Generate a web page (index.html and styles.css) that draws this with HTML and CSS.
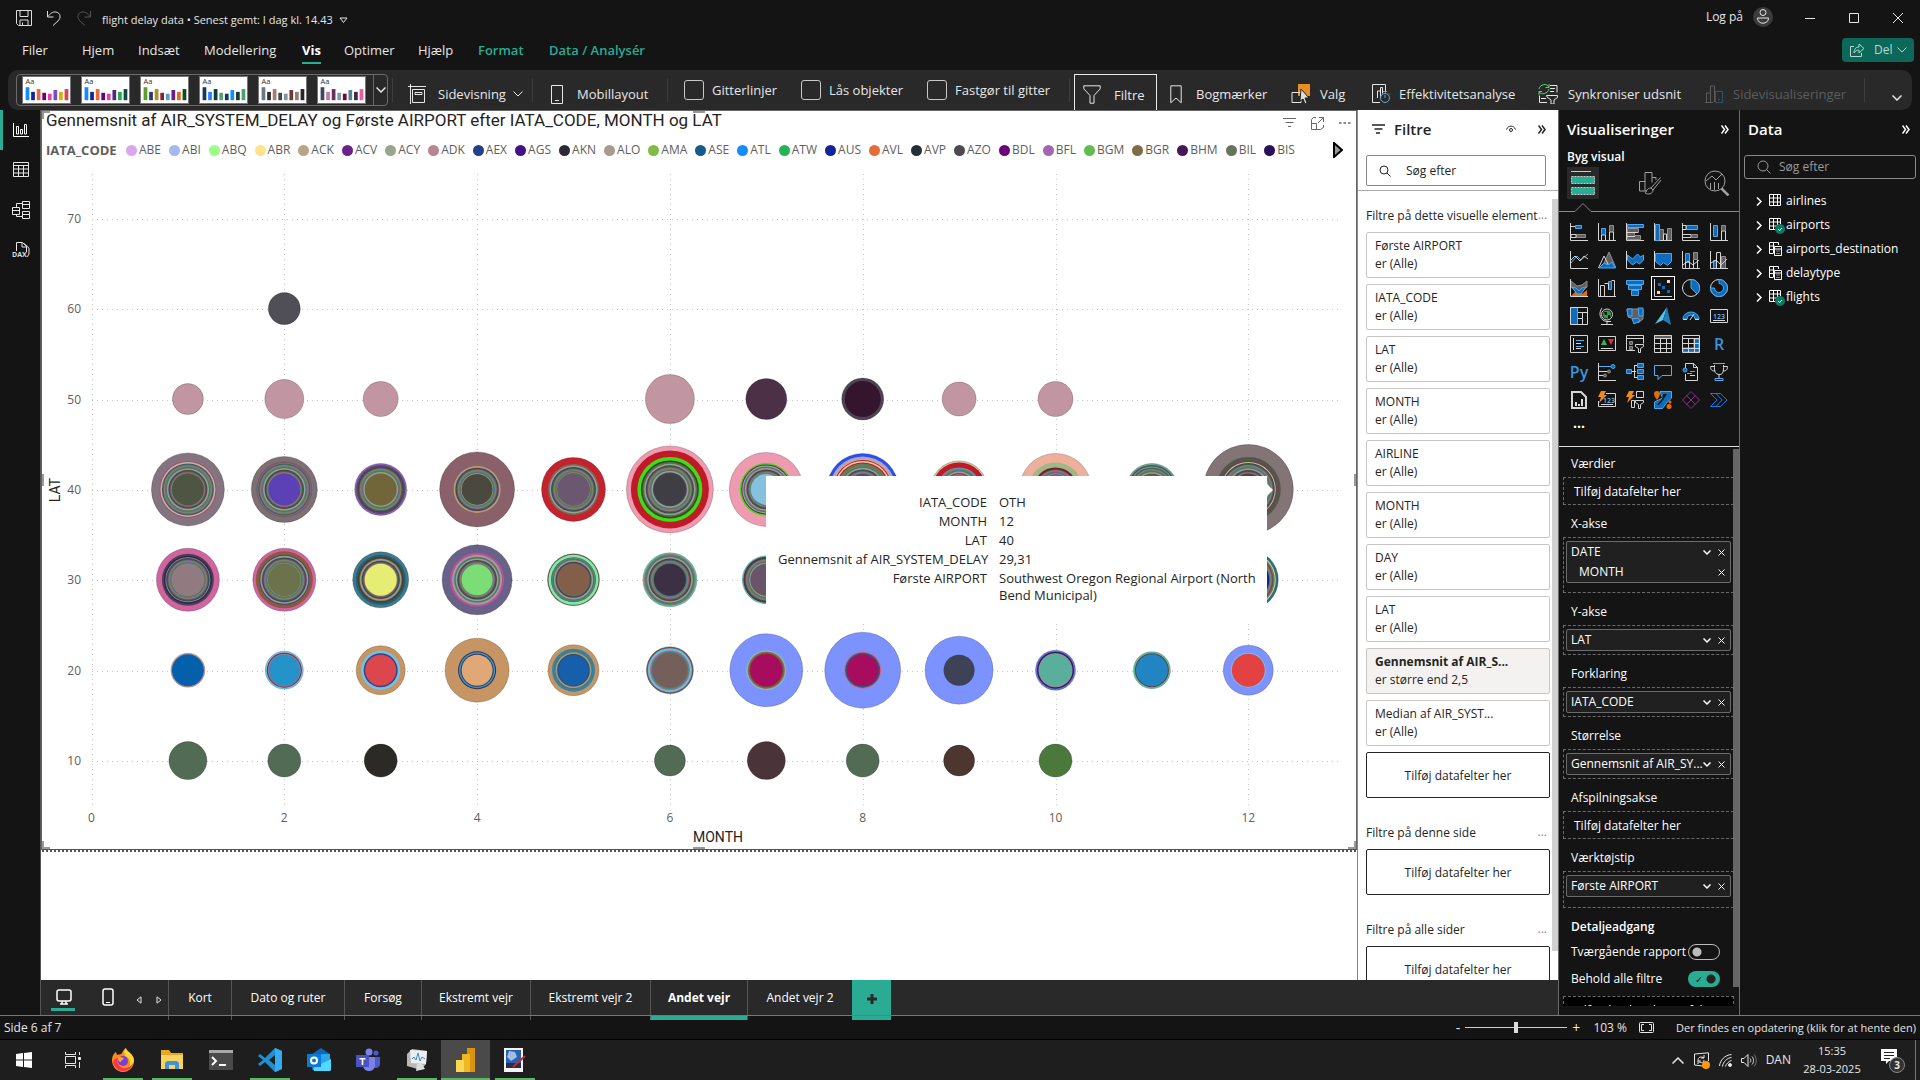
FILE: index.html
```html
<!DOCTYPE html>
<html lang="da">
<head>
<meta charset="utf-8">
<title>flight delay data</title>
<link rel="stylesheet" href="styles.css">
</head>
<body>
<header class="titlebar">
  <div class="quick">
    <button class="plain" aria-label="Gem"><svg width="16" height="16" viewBox="0 0 16 16"><path d="M.5.5h15v15H2.500l-2-2zM4 .5v6h8v-6M4 15.500v-5.500h8v5.500M6.500 12.500v3"/></svg></button>
    <button class="plain" aria-label="Fortryd"><svg width="16" height="16" viewBox="0 0 16 16"><path d="M1.500 1v6h6M2 6.500C4 3.500 7 1.500 10 2c5 1 5 6 2 9l-5 4.500"/></svg></button>
    <button class="plain dim" aria-label="Annuller fortryd"><svg width="16" height="16" viewBox="0 0 16 16"><path d="M14.500 1v6h-6M14 6.500C12 3.500 9 1.500 6 2c-5 1-5 6-2 9l5 4.500"/></svg></button>
  </div>
  <button class="plain filename">flight delay data • Senest gemt: I dag kl. 14.43 <svg width="9" height="7" viewBox="0 0 9 7"><path d="M1 1h7L4.500 5.500z"/></svg></button>
  <div class="account">
    <span>Log på</span>
    <svg width="20" height="20" viewBox="0 0 20 20"><circle cx="10" cy="10" r="10" fill="#3b3b3b" stroke="none"/><circle cx="10" cy="5.500" r="3"/><path d="M4.500 11h11c0 7-11 7-11 0z"/></svg>
  </div>
  <div class="wincontrols">
    <button class="plain" aria-label="Minimer"><svg width="12" height="12" viewBox="0 0 12 12"><path d="M1 6.500h10"/></svg></button>
    <button class="plain" aria-label="Maksimer"><svg width="12" height="12" viewBox="0 0 12 12"><path d="M1.500 1.500h9v9h-9z"/></svg></button>
    <button class="plain" aria-label="Luk"><svg width="12" height="12" viewBox="0 0 12 12"><path d="M1 1l10 10M11 1L1 11"/></svg></button>
  </div>
</header>

<nav class="menubar">
  <div class="menus">
    <a href="#">Filer</a><a href="#">Hjem</a><a href="#">Indsæt</a><a href="#">Modellering</a><a href="#" class="active">Vis</a><a href="#">Optimer</a><a href="#">Hjælp</a><a href="#" class="context">Format</a><a href="#" class="context">Data / Analysér</a>
  </div>
  <button class="share"><svg width="16" height="16" viewBox="0 0 16 16"><path d="M5 4.500H1.500v10h11V11M5 11c0-4 2-6 5-6V2l5 4.500-5 4.500V8C8 8 6 9 5 11z"/></svg>Del<svg width="10" height="6" viewBox="0 0 10 6"><path d="M.5.5L5 5 9.500.5"/></svg></button>
</nav>

<div class="ribbon">
  <div class="gallerycell"><div class="gallery"><div class="themes" id="themes"></div><button class="plain more" aria-label="Flere temaer"><svg width="10" height="6" viewBox="0 0 10 6"><path class="heavy" d="M.5.5L5 5 9.500.5"/></svg></button></div></div>
  <button class="tool sep"><svg width="20" height="20" viewBox="0 0 20 20"><path d="M1 2.500h18M3.500 0v20M5.500 5.500h12v13h-12zM8 8.500h7v2H8z"/></svg>Sidevisning<svg width="10" height="6" viewBox="0 0 10 6"><path d="M.5.5L5 5 9.500.5"/></svg></button>
  <button class="tool sep mobile"><svg width="12" height="19" viewBox="0 0 12 19"><path d="M.5.5h11v18H.5zM4 15.500h4"/></svg>Mobillayout</button>
  <div class="checks sep">
    <label><input type="checkbox">Gitterlinjer</label>
    <label><input type="checkbox">Lås objekter</label>
    <label><input type="checkbox">Fastgør til gitter</label>
  </div>
  <div class="filtercell sep"><button class="tool on"><svg width="18" height="19" viewBox="0 0 18 19"><path d="M.8.8h16.400v3L11 10.500v7.700H7V10.500L.8 3.800z"/></svg>Filtre</button></div>
  <button class="tool mark"><svg width="12" height="19" viewBox="0 0 12 19"><path d="M.8.8h10.400v17L6 13l-5.200 4.800z"/></svg>Bogmærker</button>
  <button class="tool pick"><svg width="20" height="20" viewBox="0 0 20 20"><path d="M7 0h12v12H7z" fill="#e88f22" stroke="none"/><path d="M1 8.500h9v10H1z"/><path d="M10 5l8 9h-4l2 5-2 1-2-5-3 2z" fill="#ddd" stroke="#222"/></svg>Valg</button>
  <button class="tool perf"><svg width="19" height="20" viewBox="0 0 19 20"><path d="M8 18.500H.5V.5h13v8M5.500 14V7h3v7M8.500 9V3.500h2v6"/><g class="blue"><circle cx="13" cy="14" r="4.500"/><path d="M13 14V11M11 7.500h4M17 9.500l1 1"/></g></svg>Effektivitetsanalyse</button>
  <button class="tool sync"><svg width="20" height="20" viewBox="0 0 20 20"><path d="M12 1.500h7v7M12 4.500h5M12 7.500h4M9 18.500H1.500v-7M3 14.500h5M8.500 11.500h11v2L16 16v4h-3v-4l-4-3z"/><path class="green" d="M1 5c1-5 8-6 10-2M11 0v3.500H7.500M11 5c-1 5-8 6-10 3M1 11V7.500h3"/></svg>Synkroniser udsnit</button>
  <button class="tool off" disabled><svg width="18" height="19" viewBox="0 0 18 19"><path d="M0 17.500h8M1.500 17V8h4v9M5.500 9V1h4v5M9.500 17V6"/><path d="M10.500 6.500h7v11h-7zM13 14.500h2" stroke="#345266"/></svg>Sidevisualiseringer</button>
  <div class="sep collapse"><button class="plain" aria-label="Skjul båndet"><svg width="10" height="6" viewBox="0 0 10 6"><path class="heavy" d="M.5.5L5 5 9.500.5"/></svg></button></div>
</div>

<main class="work">
  <nav class="rail">
    <button class="plain current" aria-label="Rapportvisning"><svg width="16" height="16" viewBox="0 0 16 16"><path d="M.5 1v13.500H16M3.500 12V4.500h2V12zM7.500 12V7.500h2V12zM11.500 12V2.500h2V12z"/></svg></button>
    <button class="plain" aria-label="Tabelvisning"><svg width="16" height="16" viewBox="0 0 16 16"><path d="M.5.5h15v14H.5zM.5 3.500h15M.5 7h15M.5 11h15M5.500 3.500v11M10.500 3.500v11"/></svg></button>
    <button class="plain" aria-label="Modelvisning"><svg width="18" height="18" viewBox="0 0 18 18"><path d="M.5 6.500h7v7h-7zM.5 9.500h7M10.500.5h7v7h-7zM10.500 3.500h7M10.500 10.500h7v7h-7zM10.500 13.500h7M4.500 6V2.500h6M4.500 14v1.500h6"/></svg></button>
    <button class="plain" aria-label="DAX-forespørgselsvisning"><svg width="18" height="18" viewBox="0 0 18 18"><path d="M4.500 10V1.500h6l4 4V11M10 1.500v4.500h5M12 2.500l5 4.500V13l-2 3"/><text x="0" y="16" class="dax">DAX</text></svg></button>
  </nav>

  <section class="center">
    <div class="upper">
      <article class="canvas">
        <div class="visual">
          <div class="vtitle">
            <h1>Gennemsnit af AIR_SYSTEM_DELAY og Første AIRPORT efter IATA_CODE, MONTH og LAT</h1>
            <div class="vtools">
              <svg width="13" height="10" viewBox="0 0 13 10"><path d="M0 .5h13M2.500 4.500h8M5 8.500h3"/></svg>
              <svg width="13" height="13" viewBox="0 0 13 13"><path d="M5 .5H2.500l-2 2V12.500h9l3-2V8M.5 6.500h5v6M8 .5h4.500V5M12.500.5L7 6"/></svg>
              <svg width="12" height="4" viewBox="0 0 12 4"><path d="M0 2h2.500M4.500 2H7M9 2h2.500" class="heavy"/></svg>
            </div>
          </div>
          <div class="legend"><b>IATA_CODE</b><ul id="legend"></ul><svg class="next" width="10" height="16" viewBox="0 0 10 16"><path d="M1 1v14l8-7z"/></svg></div>
          <svg class="plot" id="plot" viewBox="42 166 1314 682"></svg>
          <i class="h tl"></i><i class="h tm"></i><i class="h bl"></i><i class="h bm"></i><i class="h br"></i><i class="h ml"></i><i class="h mr"></i>
          <div class="tooltip">
            <dl>
              <dt>IATA_CODE</dt><dd>OTH</dd>
              <dt>MONTH</dt><dd>12</dd>
              <dt>LAT</dt><dd>40</dd>
              <dt>Gennemsnit af AIR_SYSTEM_DELAY</dt><dd>29,31</dd>
              <dt>Første AIRPORT</dt><dd>Southwest Oregon Regional Airport (North Bend Municipal)</dd>
            </dl>
          </div>
        </div>
      </article>

      <aside class="filters">
        <div class="fhead">
          <svg width="13" height="10" viewBox="0 0 13 10"><path d="M0 1h13M2.500 5h8M4 9h4" class="heavy"/></svg>
          <h2>Filtre</h2>
          <svg width="10" height="8" viewBox="0 0 10 8"><path d="M.5 4.500C2 0 8 0 9.500 4.500"/><circle cx="5" cy="5" r="1.500"/></svg>
          <button class="plain" aria-label="Skjul ruden"><svg width="8" height="9" viewBox="0 0 8 9"><path d="M.5.5l3 4-3 4M4 .5l3 4-3 4" class="heavy"/></svg></button>
        </div>
        <div class="fsearch"><svg width="12" height="12" viewBox="0 0 12 12"><circle cx="5" cy="5" r="4"/><path d="M8 8l3.500 3.500"/></svg><input type="text" placeholder="Søg efter" aria-label="Søg i filtre"></div>
        <div class="flist">
          <h3>Filtre på dette visuelle element<span>...</span></h3>
          <div class="card"><p>Første AIRPORT</p><p>er (Alle)</p></div>
          <div class="card"><p>IATA_CODE</p><p>er (Alle)</p></div>
          <div class="card"><p>LAT</p><p>er (Alle)</p></div>
          <div class="card"><p>MONTH</p><p>er (Alle)</p></div>
          <div class="card"><p>AIRLINE</p><p>er (Alle)</p></div>
          <div class="card"><p>MONTH</p><p>er (Alle)</p></div>
          <div class="card"><p>DAY</p><p>er (Alle)</p></div>
          <div class="card"><p>LAT</p><p>er (Alle)</p></div>
          <div class="card set"><p>Gennemsnit af AIR_S...</p><p>er større end 2,5</p></div>
          <div class="card"><p>Median af AIR_SYST...</p><p>er (Alle)</p></div>
          <div class="drop">Tilføj datafelter her</div>
          <h3 class="later">Filtre på denne side<span>...</span></h3>
          <div class="drop">Tilføj datafelter her</div>
          <h3 class="later">Filtre på alle sider<span>...</span></h3>
          <div class="drop">Tilføj datafelter her</div>
        </div>
      </aside>
    </div>

    <nav class="pages">
      <button class="plain view on" aria-label="Skrivebordslayout"><svg width="16" height="16" viewBox="0 0 16 16"><rect x="1" y="1" width="14" height="11" rx="2" class="heavy"/><path d="M4 15h8M6 12v3M10 12v3" class="heavy"/></svg></button>
      <button class="plain view" aria-label="Mobillayout"><svg width="12" height="18" viewBox="0 0 12 18"><rect x="1" y="1" width="10" height="16" rx="2" class="heavy"/><path d="M4 14.500h4"/></svg></button>
      <button class="plain" aria-label="Forrige side"><svg width="6" height="8" viewBox="0 0 6 8"><path d="M5 .8v6.400L1 4z"/></svg></button>
      <button class="plain" aria-label="Næste side"><svg width="6" height="8" viewBox="0 0 6 8"><path d="M1 .8v6.400L5 4z"/></svg></button>
      <a href="#">Kort</a><a href="#">Dato og ruter</a><a href="#">Forsøg</a><a href="#">Ekstremt vejr</a><a href="#">Ekstremt vejr 2</a><a href="#" class="active">Andet vejr</a><a href="#">Andet vejr 2</a>
      <button class="add" aria-label="Ny side"><svg width="12" height="12" viewBox="0 0 12 12"><path d="M6 1v10M1 6h10"/></svg></button>
    </nav>
  </section>

  <aside class="viz">
    <div class="phead"><h2>Visualiseringer</h2><button class="plain" aria-label="Skjul ruden"><svg width="8" height="9" viewBox="0 0 8 9"><path d="M.5.5l3 4-3 4M4 .5l3 4-3 4" class="heavy"/></svg></button></div>
    <h3>Byg visual</h3>
    <div class="modes">
      <button class="plain on" aria-label="Byg visual"><svg width="26" height="26" viewBox="0 0 26 26"><path d="M1 1.500h20"/><rect x="1.500" y="6.500" width="23" height="7" fill="#2aac94" stroke-dasharray="2 1"/><rect x="1.500" y="17.500" width="23" height="7" fill="#2aac94" stroke-dasharray="2 1"/></svg></button>
      <button class="plain grey" aria-label="Formatér visual"><svg width="24" height="24" viewBox="0 0 24 24"><path d="M9 20H1.500V10.500H7V20M7 11V1.500h7v10M14 6.500h4V9M22.500 6.500L13 17M23 9L15 19M13 17c-4 0-4 3-6 5 3 2 8 1 8-3z"/></svg></button>
      <button class="plain grey" aria-label="Analyse"><svg width="26" height="26" viewBox="0 0 26 26"><circle cx="11" cy="11" r="10"/><path d="M2 11l6-5 4 4 6-6M6.500 19v-6M10.500 20v-8M14.500 19v-6"/><path d="M17.500 18.500l7 7" stroke-width="2.500"/></svg></button>
    </div>
    <svg class="notch" width="180" height="9" viewBox="0 0 180 9"><path d="M0 8.500H16L24 .5 32 8.500H180"/></svg>
    <div class="types">
      <button><svg viewBox="0 0 18 18"><path class="w" d="M.5 0V17.500H18"/><path class="g" d="M6.500 11.500h9v3H6.500z"/><path class="w" d="M1 3.500h5M1 11.500h5v3H1z"/><path class="b" d="M5.500 2.500h6v3h-6z"/></svg></button>
      <button><svg viewBox="0 0 18 18"><path class="w" d="M.5 0V17.500H18M3.500 17v-5h4v5M11.500 17V9h4v8"/><path class="g" d="M11.500 2.500h4v6h-4z"/><path class="b" d="M3.500 5.500h4v6h-4z"/></svg></button>
      <button><svg viewBox="0 0 18 18"><path class="g" d="M1.500 5.500h11v4h-4v3h6v4h-13z"/><path class="w" d="M.5 0V17.500H18M1 9.500h11M1 13.500h8"/><path class="b" d="M1.500 1.500h16v3h-16z"/></svg></button>
      <button><svg viewBox="0 0 18 18"><path class="g" d="M5.500 6.500h4v11h-4zM13.500 5.500h4v12h-4z"/><path class="w" d="M.5 0V17.500H18M9.500 17v-6h3v6"/><path class="b" d="M1.500 1.500h4v16h-4z"/></svg></button>
      <button><svg viewBox="0 0 18 18"><path class="w" d="M.5 0V17.500H18M1 11.500h8v3H1"/><path class="g" d="M9.500 11.500h6v3h-6z"/><path class="b" d="M4.500 2.500h11v4h-11z"/><path class="w" d="M1 2.500h3v4H1"/></svg></button>
      <button><svg viewBox="0 0 18 18"><path class="w" d="M.5 0V17.500H18M11.500 17V8h4v9"/><path class="b" d="M3.500 2.500h4v11h-4z"/><path class="g" d="M11.500 2.500h4v5h-4z"/></svg></button>

      <button><svg viewBox="0 0 18 18"><path class="l" d="M1 12l6-7 4 4 7-6"/><path class="w" d="M.5 0V17.500H18M1 9l4-4 5 5 4-5 4 3"/></svg></button>
      <button><svg viewBox="0 0 18 18"><path class="g" d="M6 12L11 1l7 16z"/><path class="w" d="M.5 17L6 5l6 12"/><path class="b" d="M1 17l5-5 4 2 4-3 3 6z"/></svg></button>
      <button><svg viewBox="0 0 18 18"><path class="b" d="M1.500 4l5 4 5-5 3 3 3-2v5l-4 4-3-2-4 3-5-5z"/><path class="w" d="M.5 0V17.500H18"/></svg></button>
      <button><svg viewBox="0 0 18 18"><path class="b" d="M1.500 2.500h16v8l-4 4-4-3-3 3-5-4z"/><path class="w" d="M.5 0V17.500H18"/></svg></button>
      <button><svg viewBox="0 0 18 18"><path class="b" d="M3.500 2.500h4v9h-4z"/><path class="g" d="M11.500 1.500h4v7h-4z"/><path class="w" d="M.5 0V17.500H18M3.500 11v6M7.500 11v6M11.500 9v8M15.500 9v8M1 14l5-4 5 4 6-5"/></svg></button>
      <button><svg viewBox="0 0 18 18"><path class="b" d="M3.500 9.500h3v8h-3z"/><path class="g" d="M11.500 5.500h4v12h-4z"/><path class="w" d="M.5 0V17.500H18M6.500 17V1.500h4V17M1 12l5-3 5 5 6-6"/></svg></button>

      <button><svg viewBox="0 0 18 18"><path d="M1 17l5-5 6 3 5-4v6z" fill="#e66c00" stroke="none"/><path class="g" d="M1 2l6 5 5-1 5-4v6l-5 4H6L1 8z"/><path class="b" d="M2 8l4 1 3 3 3-3 4-1-5 7H7z"/><path class="w" d="M.5 0V17.500H18"/></svg></button>
      <button><svg viewBox="0 0 18 18"><path class="b" d="M10.500 2.500h3v8h-3z"/><path class="w" d="M.5 0V17.500H18M2.500 17V6.500h4V17M6.500 4.500h4v6M13.500 1.500h3V17"/></svg></button>
      <button><svg viewBox="0 0 18 18"><path class="b" d="M.5 1.500h17v4H.5zM2.500 6.500h13v4h-13zM5.500 11.500h7v5h-7z"/></svg></button>
      <button class="on"><svg viewBox="0 0 18 18"><path class="w" d="M.5 0V17.500H18"/><path fill="#ddd" stroke="none" d="M13 1h3v3h-3zM3 12h3v3H3z"/><path fill="#0f6cbd" stroke="none" d="M4 4h3v3H4zM8 7h3v3H8zM13 11h3v3h-3z"/></svg></button>
      <button><svg viewBox="0 0 18 18"><circle class="w" cx="9" cy="9" r="8.500"/><path class="b" d="M9 .5a8.500 8.500 0 016 14.500L9 9z"/></svg></button>
      <button><svg viewBox="0 0 18 18"><circle class="w" cx="9" cy="9" r="8.500"/><path class="b" d="M9 .5a8.500 8.500 0 11-8.500 8.500h4A4.500 4.500 0 109 4.500z"/></svg></button>

      <button><svg viewBox="0 0 18 18"><path class="b" d="M.5.5h7v17h-7z"/><path class="w" d="M.5.5h17v17H.5zM8 5.500h9M8 11.500h4.500v6M12.500 5.500v6"/></svg></button>
      <button><svg viewBox="0 0 18 18"><circle class="w" cx="9" cy="7.500" r="5.500"/><circle cx="9" cy="7.500" r="4" fill="#2f9e4a" stroke="none"/><path d="M6 5h3v3H7zM10 8h2v3h-2z" fill="#141414" stroke="none"/><path class="w" d="M4 1C0 6 2 14 9 14.500h4M9 15v2M3 17.500h12"/></svg></button>
      <button><svg viewBox="0 0 18 18"><path class="g" d="M1 2h16v10l-5 4-4-4-6-2z"/><path class="b" d="M1 2h5v7H2zM12 1h5v8h-4zM6 12l6-1 2 3-6 3z"/></svg></button>
      <button><svg viewBox="0 0 18 18"><path d="M13 0L1 17l8-4z" fill="#5cc3ee" stroke="none"/><path d="M13 0l4 18-8-5z" fill="#1d7fb5" stroke="none"/></svg></button>
      <button><svg viewBox="0 0 18 18"><path class="b" d="M1 12a8 7 0 0116 0h-4a4 4 0 00-8 0z"/><path class="w" d="M1 12.500h4M13 12.500h4M8 13l4-6"/></svg></button>
      <button><svg viewBox="0 0 18 18"><path class="w" d="M.5 2.500h17v13H.5zM3 13.500h12"/><text x="3" y="12">123</text></svg></button>

      <button><svg viewBox="0 0 18 18"><path class="w" d="M.5.5h17v17H.5zM3.500 3v12M6 5.500h8M6 8.500h5M6 11.500h8M6 13.500h5"/><path class="l" d="M6 5.500h8M6 11.500h8"/></svg></button>
      <button><svg viewBox="0 0 18 18"><path class="w" d="M.5 1.500h17v14H.5zM3 13.500h12"/><path d="M3 10l3-6 3 6z" fill="#38b55a" stroke="none"/><path d="M10 4h6l-3 6z" fill="#e03040" stroke="none"/></svg></button>
      <button><svg viewBox="0 0 18 18"><path class="w" d="M9 15.500H.5V.5h17v8M.5 3.500h17"/><path class="g" d="M3.500 6.500h3v3h-3zM3.500 11.500h3v3h-3z"/><path class="w" d="M9.500 9.500h8v2l-3 2v4h-2v-4l-3-2z"/></svg></button>
      <button><svg viewBox="0 0 18 18"><path class="g" d="M.5.5h17v3H.5z"/><path class="w" d="M.5.5h17v17H.5zM1 3.500h16M1 8.500h16M1 13.500h16M6.500 4v13M12.500 4v13"/></svg></button>
      <button><svg viewBox="0 0 18 18"><path class="b" d="M12 4h5v13H1v-4h11z"/><path class="w" d="M.5.5h17v17H.5zM1 3.500h16M1 8.500h16M1 13.500h16M6.500 4v13M12.500 4v13"/></svg></button>
      <button class="letter">R</button>

      <button class="letter">Py</button>
      <button><svg viewBox="0 0 18 18"><path class="w" d="M.5 0V17.500H18M1 8.500h9M1 12.500h5"/><circle class="g" cx="11" cy="8.500" r="1.500"/><circle class="g" cx="7" cy="12.500" r="1.500"/><path class="l" d="M1 3.500h12"/><circle class="b" cx="15" cy="3.500" r="2"/></svg></button>
      <button><svg viewBox="0 0 18 18"><path class="w" d="M6 8.500h4M8.500 3v12M8 2.500h3M8 14.500h3"/><path class="b" d="M.5 6.500h5v4h-5zM11.500.5h6v4h-6zM11.500 6.500h6v4h-6zM11.500 12.500h6v4h-6z"/></svg></button>
      <button><svg viewBox="0 0 18 18"><path class="l" d="M.5 2.500h17v10H8l-4 4v-4H.5z"/></svg></button>
      <button><svg viewBox="0 0 18 18"><path class="w" d="M3.500 5V.5h8l4 4v13h-12V11M11.500.5v4h4M8 12.500h5"/><path class="l" d="M8 8.500h5M5 10.500h5"/><circle class="b" cx="3" cy="7" r="2"/></svg></button>
      <button><svg viewBox="0 0 18 18"><path class="w" d="M4.500 2C4 10 6 11 9 11.500S14 10 13.500 2M4 3.500H.5C.5 7 2 8 5 8M14 3.500h3.500C17.500 7 16 8 13 8M9 12v3"/><path class="l" d="M3 .5h12M5 15.500h8v2H5z"/></svg></button>

      <button><svg viewBox="0 0 18 18"><path class="w" stroke-width="2" d="M2 1h9l5 5v11H2z"/><path fill="#ddd" stroke="none" d="M5 11h2v4H5zM8 13h2v2H8zM11 8h2v7h-2z"/></svg></button>
      <button><svg viewBox="0 0 18 18"><path class="w" d="M8 2.500h9.500v13H.5V10M3 13.500h12"/><text x="5" y="12">123</text><path d="M3 0h5L6 4h3L1 12l2-6H0z" fill="#f08a20" stroke="none"/></svg></button>
      <button><svg viewBox="0 0 18 18"><path class="w" d="M10.500.5h7v6h-7zM5.500 9.500h3v7h-3zM9.500 9.500h8v2l-3 2v4h-2v-4l-3-2z"/><path d="M3 0h5L6 4h3L1 12l2-6H0z" fill="#f08a20" stroke="none"/></svg></button>
      <button><svg viewBox="0 0 18 18"><path class="b" d="M6 .5h11.500V7l-5 5-4 5.500h-8V11l8-4z"/><path d="M9 3h4L9 9l-4 5H3l5-6z" fill="#141414" stroke="none"/><path d="M0 3a3 3 0 016 0c0 2-3 6-3 6S0 5 0 3z" fill="#e66c00" stroke="none"/><circle cx="16" cy="11" r="1.500" fill="#e66c00" stroke="none"/><circle cx="15" cy="15.500" r="2.500" fill="#e66c00" stroke="none"/></svg></button>
      <button><svg viewBox="0 0 18 18"><path d="M9 .5L17.500 9 9 17.500.5 9zM4.500 4.500l9 9M13.500 4.500l-9 9" stroke="#8a2f8f"/></svg></button>
      <button><svg viewBox="0 0 18 18"><path d="M.5 2.500h10L17 9l-6.500 6.500H.5L7 9zM6 2.500L12 9l-6 6.500" stroke="#1478e8"/></svg></button>
      <button class="dots">...</button>
    </div>
    <div class="wells">
      <h4>Værdier</h4><div class="well empty">Tilføj datafelter her</div>
      <h4>X-akse</h4><div class="well tall"><div class="field"><span>DATE</span><svg width="8" height="5" viewBox="0 0 8 5"><path d="M.5.5L4 4 7.500.5" class="heavy"/></svg><svg width="7" height="7" viewBox="0 0 7 7"><path d="M.5.500l6 6m0-6l-6 6"/></svg><span class="sub">MONTH</span><svg width="7" height="7" viewBox="0 0 7 7"><path d="M.5.500l6 6m0-6l-6 6"/></svg></div></div>
      <h4>Y-akse</h4><div class="well"><div class="field"><span>LAT</span><svg width="8" height="5" viewBox="0 0 8 5"><path d="M.5.5L4 4 7.500.5" class="heavy"/></svg><svg width="7" height="7" viewBox="0 0 7 7"><path d="M.5.500l6 6m0-6l-6 6"/></svg></div></div>
      <h4>Forklaring</h4><div class="well"><div class="field"><span>IATA_CODE</span><svg width="8" height="5" viewBox="0 0 8 5"><path d="M.5.5L4 4 7.500.5" class="heavy"/></svg><svg width="7" height="7" viewBox="0 0 7 7"><path d="M.5.500l6 6m0-6l-6 6"/></svg></div></div>
      <h4>Størrelse</h4><div class="well"><div class="field"><span>Gennemsnit af AIR_SY...</span><svg width="8" height="5" viewBox="0 0 8 5"><path d="M.5.5L4 4 7.500.5" class="heavy"/></svg><svg width="7" height="7" viewBox="0 0 7 7"><path d="M.5.500l6 6m0-6l-6 6"/></svg></div></div>
      <h4>Afspilningsakse</h4><div class="well empty">Tilføj datafelter her</div>
      <h4>Værktøjstip</h4><div class="well last"><div class="field"><span>Første AIRPORT</span><svg width="8" height="5" viewBox="0 0 8 5"><path d="M.5.5L4 4 7.500.5" class="heavy"/></svg><svg width="7" height="7" viewBox="0 0 7 7"><path d="M.5.500l6 6m0-6l-6 6"/></svg></div></div>
      <h4 class="strong">Detaljeadgang</h4>
      <label class="toggle">Tværgående rapport<input type="checkbox"></label>
      <label class="toggle">Behold alle filtre<input type="checkbox" checked></label>
      <div class="cut"><div class="well empty">Tilføj detaljeadgangsfelter her</div></div>
    </div>
  </aside>

  <aside class="data">
    <div class="phead"><h2>Data</h2><button class="plain" aria-label="Skjul ruden"><svg width="8" height="9" viewBox="0 0 8 9"><path d="M.5.5l3 4-3 4M4 .5l3 4-3 4" class="heavy"/></svg></button></div>
    <div class="dsearch"><svg width="14" height="14" viewBox="0 0 14 14"><circle cx="6" cy="6" r="5"/><path d="M9.500 9.500l4 4"/></svg><input type="text" placeholder="Søg efter" aria-label="Søg i data"></div>
    <ul class="tree">
      <li><svg width="6" height="9" viewBox="0 0 6 9"><path class="heavy" d="M1 .5l4 4-4 4"/></svg><svg width="14" height="16" viewBox="0 0 14 16"><path d="M1.500 1.500h11v11h-11zM1.500 5h11M1.500 9h11M5.500 1.500v11M9.500 1.500v11"/></svg>airlines</li>
      <li><svg width="6" height="9" viewBox="0 0 6 9"><path class="heavy" d="M1 .5l4 4-4 4"/></svg><svg width="17" height="18" viewBox="0 0 17 18"><path d="M1.500 2.500h11v11h-11zM1.500 6h11M1.500 10h11M5.500 2.500v11M9.500 2.500v11"/><circle cx="12" cy="13" r="5" fill="#0e7a62" stroke="none"/><path d="M10 13l1.500 1.500L14 12"/></svg>airports</li>
      <li><svg width="6" height="9" viewBox="0 0 6 9"><path class="heavy" d="M1 .5l4 4-4 4"/></svg><svg width="14" height="16" viewBox="0 0 14 16"><path d="M5 12.500H1.500v-11h9V4M1.500 5h5M1.500 8.500h5M5.500 1.500v11M6.500 5.500h7v9h-7zM6.500 8h7M8.500 10h1M10.500 10h1M8.500 12.500h1M10.500 12.500h1"/></svg>airports_destination</li>
      <li><svg width="6" height="9" viewBox="0 0 6 9"><path class="heavy" d="M1 .5l4 4-4 4"/></svg><svg width="14" height="16" viewBox="0 0 14 16"><path d="M5 12.500H1.500v-11h9V4M1.500 5h5M1.500 8.500h5M5.500 1.500v11M6.500 5.500h7v9h-7zM6.500 8h7M8.500 10h1M10.500 10h1M8.500 12.500h1M10.500 12.500h1"/></svg>delaytype</li>
      <li><svg width="6" height="9" viewBox="0 0 6 9"><path class="heavy" d="M1 .5l4 4-4 4"/></svg><svg width="17" height="18" viewBox="0 0 17 18"><path d="M1.500 2.500h11v11h-11zM1.500 6h11M1.500 10h11M5.500 2.500v11M9.500 2.500v11"/><circle cx="12" cy="13" r="5" fill="#0e7a62" stroke="none"/><path d="M10 13l1.500 1.500L14 12"/></svg>flights</li>
    </ul>
  </aside>
</main>

<footer class="status">
  <span>Side 6 af 7</span>
  <div class="zoom"><span>-</span><input type="range" min="0" max="100" value="50" aria-label="Zoom"><span>+</span></div>
  <span class="pct">103 %</span>
  <svg width="15" height="11" viewBox="0 0 15 11"><rect x=".5" y=".5" width="14" height="10" rx="1"/><path d="M5 2.500H2.500v6H5M10 2.500h2.500v6H10"/></svg>
  <a href="#" class="update">Der findes en opdatering (klik for at hente den)</a>
</footer>

<div class="taskbar">
  <div class="apps">
    <button aria-label="Start"><svg width="16" height="16" viewBox="0 0 16 16"><path class="solid" d="M0 2l7-1v6.500H0zM8 1l8-1v7.500H8zM0 8.500h7V15l-7-1zM8 8.500h8V16l-8-1z"/></svg></button>
    <button aria-label="Opgavevisning"><svg width="16" height="16" viewBox="0 0 16 16"><path d="M.5 0v2.500h10V0M.5 4.500h10v7H.5zM.5 16v-2.500h10V16M14.500 0v3M14.500 10v6"/><path fill="#fff" d="M13.500 5.500h2v2h-2z"/></svg></button>
    <button class="run" aria-label="Firefox"><svg class="art" width="24" height="24" viewBox="0 0 24 24"><path d="M1 12C1 8 3 5 5 4l1 3c2-1 4 0 5-2 1-2 2-4 4-5 0 4 8 5 8 13 0 6-5 11-11 11S1 19 1 12z" fill="#ff8a16"/><path d="M2 14c1 5 5 9 10 9s9-3 10-8c-3 6-11 7-14 2-2-3-2-5 0-7-3 0-5 1-6 4z" fill="#f5384f"/><path d="M15 0c0 4 8 5 8 13-1 3-3 5-5 6 2-4 1-8-2-10-3-2-4-6-1-9z" fill="#ffd63a"/><circle cx="12" cy="13" r="5" fill="#7a3fd8"/><path d="M7 10c2-2 4 0 6 0-1 2-3 2-3 4-2 0-3-2-3-4z" fill="#ffa62b"/></svg></button>
    <button class="run" aria-label="Stifinder"><svg class="art" width="22" height="20" viewBox="0 0 22 20"><path d="M0 0h8l2 3h12v16H0z" fill="#e9a820"/><path d="M0 5h22v14H0z" fill="#fbd35f"/><path d="M4 19v-6l2-2h10l2 2v6h-4v-4H8v4z" fill="#3b95d9"/></svg></button>
    <button aria-label="Terminal"><svg width="24" height="20" viewBox="0 0 24 20"><path d="M0 0h24v20H0z" fill="#4a4a4a" stroke="none"/><path d="M0 0h24v3H0z" fill="#a8a8a8" stroke="none"/><path d="M3 7l4 4-4 4M10 15h7" stroke="#fff" stroke-width="2"/></svg></button>
    <button class="run" aria-label="Visual Studio Code"><svg class="art" width="24" height="24" viewBox="0 0 24 24"><path d="M17 0l7 3v18l-7 3L7 14l-5 4-2-2 5-4-5-4 2-2 5 4zM17 7l-6 5 6 5z" fill="#1f8fd6"/><path d="M17 0l7 3v18l-7 3z" fill="#35acf0"/></svg></button>
    <button aria-label="Outlook"><svg class="art" width="24" height="24" viewBox="0 0 24 24"><path d="M5 6l9-6 9 6v16H5z" fill="#1066b8"/><path d="M14 6h9v6l-9 6z" fill="#28a8ea"/><path d="M24 11v10c0 2-1 2-2 2H7l-1-3z" fill="#50d9ff"/><path d="M0 6h14v13H0z" fill="#0f78d4"/><circle cx="7" cy="12.500" r="3" fill="none" stroke="#fff" stroke-width="2"/></svg></button>
    <button aria-label="Teams"><svg class="art" width="24" height="24" viewBox="0 0 24 24"><circle cx="13" cy="4" r="3.500" fill="#7b83eb"/><circle cx="20" cy="5" r="2.500" fill="#5059c9"/><path d="M16 9h8v7c0 4-5 5-7 3z" fill="#5059c9"/><path d="M7 9h12v8c0 8-12 8-12 0z" fill="#7b83eb"/><path d="M0 7h13v12H0z" fill="#4b53bc"/><path d="M3.500 10h6v1.500H7.300V17H5.700v-5.500H3.500z" fill="#fff"/></svg></button>
    <button class="run" aria-label="Ressourceovervågning"><svg class="art" width="24" height="24" viewBox="0 0 24 24"><path d="M2 6l5-5 15 2-1 13-5 6-14-4z" fill="#b8b8b8"/><path d="M5 2l17 1-1 13-15-1z" fill="#eee"/><path d="M7 11l2-2 2 3 2-7 2 8 2-4 3 2" fill="none" stroke="#3090c8"/><path d="M12 16h5l3 5-9 2z" fill="#ddd"/></svg></button>
    <button class="run front" aria-label="Power BI Desktop"><svg class="art" width="20" height="24" viewBox="0 0 20 24"><path d="M11 0h8v24h-8z" fill="#d9930f"/><path d="M6 6h8v18H6z" fill="#f0b820"/><path d="M0 12h8v12H0z" fill="#fbd84f"/></svg></button>
    <button class="run" aria-label="Paint"><svg class="art" width="22" height="24" viewBox="0 0 22 24"><path d="M0 0h19v24H0z" fill="#f4f4f4"/><path d="M2 2h15v14H2z" fill="#2a62b0"/><path d="M5 3l6 1 2 5-6 4-4-4z" fill="#9cc0ea"/><path d="M2 15h15v5H2z" fill="#222f50"/><path d="M21 8L9 19" stroke="#c02a30" stroke-width="2"/></svg></button>
  </div>
  <div class="tray">
    <svg width="12" height="7" viewBox="0 0 12 7"><path class="heavy" d="M.5 6.500L6 1l5.500 5.500"/></svg>
    <svg width="17" height="17" viewBox="0 0 17 17"><path d="M15.500 9V.8L1.500 2v11l8 1M5 9c0-4 3-5 6-3M11 3v3H8M5 12V9h3M11 8c0 3-3 3-5 2"/><circle cx="13" cy="13" r="4" fill="#ff9a10" stroke="none"/></svg>
    <svg width="13" height="13" viewBox="0 0 13 13"><path d="M.5 12C1 6 6 1 12.500.5M3.500 12.500C4 8 8 4 12.500 3.500M6.500 12.500C7 10 10 7 12.500 6.500"/><circle cx="11" cy="11" r="1.500" fill="#eee"/></svg>
    <svg width="16" height="13" viewBox="0 0 16 13"><path d="M.5 4.500h2.500l4-4v12l-4-4H.5zM9 4.500c1 1 1 3 0 4M11 2.500c2 2 2 6 0 8"/><path d="M13 .5c3 3 3 9 0 12" stroke="#777"/></svg>
    <span class="lang">DAN</span>
    <span class="clock">15:35<br>28-03-2025</span>
    <span class="notes"><svg width="16" height="15" viewBox="0 0 16 15"><path d="M0 0h16v12H8l-3 3v-3H0z" fill="#fff" stroke="none"/><path d="M3 3.500h10M3 6.500h10M3 9.500h6" stroke="#222"/></svg><b>3</b></span>
  </div>
</div>
<script src="app.js"></script>
</body>
</html>
```
FILE: styles.css
```css
* { box-sizing: border-box; margin: 0; padding: 0; }
body {
  height: 100vh; min-height: 700px; display: flex; flex-direction: column;
  font-family: "Open Sans", "Noto Sans", sans-serif; font-size: 12px; line-height: 16px;
  color: #e6e6e6; background: #141414;
}
body > * { flex: none; }
button, input { font: inherit; color: inherit; background: none; border: 0; }
a { color: inherit; text-decoration: none; }
ul { list-style: none; }
svg { fill: none; stroke: currentColor; flex: none; display: block; }
.heavy { stroke-width: 1.5; }
.plain { display: flex; align-items: center; justify-content: center; }

/* Title bar */
.titlebar { height: 34px; display: flex; align-items: center; font-size: 11px; }
.quick { display: flex; gap: 14px; padding: 2px 0 0 16px; color: #ddd; }
.dim { color: #555; }
.filename { gap: 6px; margin: 6px 0 0 10px; }
.account { display: flex; gap: 10px; align-items: center; margin-left: auto; font-size: 12px; }
.wincontrols { display: flex; gap: 32px; padding: 2px 16px 0 31px; }

/* Menu */
.menubar { height: 36px; display: flex; justify-content: space-between; padding: 0 6px 0 22px; }
.menus { display: grid; grid-template-columns: 60px 56px 66px 98px 42px 74px 60px 71px 100px; font-size: 13px; line-height: 32px; white-space: nowrap; }
.menus a { justify-self: start; height: 30px; }
.menus .active { font-weight: 700; color: #fff; border-bottom: 2px solid #2aac94; }
.menus .context { color: #2aac94; font-weight: 600; }
.share { display: flex; align-items: center; gap: 9px; width: 72px; height: 24px; margin-top: 4px; padding: 0 7px; background: #0c695a; border-radius: 4px; color: #b9d6d0; font-size: 12px; }
.share svg:last-child { margin-left: -4px; }

/* Ribbon */
.ribbon { height: 40px; margin: 0 8px; background: #292929; border-radius: 10px; display: grid; grid-template-columns: 384px 140px 135px 402px 93px 120px 80px 166px 167px 169px 1fr; font-size: 13px; white-space: nowrap; }
.sep { background: linear-gradient(#3d3d3d, #3d3d3d) 0 8px / 1px 24px no-repeat; }
.gallerycell { padding: 4px 0 4px 8px; }
.gallery { width: 372px; height: 32px; display: flex; border: 1px solid #6b6b6b; border-radius: 4px; }
.themes { width: 356px; display: flex; gap: 10px; padding: 1px 0 0 5px; }
.themes svg { background: #fff; border: 1px solid #777; stroke: none; }
.themes text { font-size: 8px; fill: #333; }
.gallery .more { flex: 1; border-left: 1px solid #6b6b6b; }
.tool { display: flex; align-items: center; gap: 11px; padding: 8px 0 0 15px; }
.tool svg:last-child { margin-left: -4px; }
.tool.mobile { padding-left: 20px; gap: 14px; padding-left: 23px; }
.checks { display: grid; grid-template-columns: 117px 126px 1fr; padding: 0 0 0 17px; }
.checks label { display: flex; gap: 8px; align-items: center; }
.checks input { appearance: none; width: 20px; height: 20px; border: 1px solid #c8c8c8; border-radius: 3px; }
.filtercell { padding: 4px 0 0 5px; }
.tool.on { width: 83px; height: 36px; border: 1px solid #e8e8e8; border-bottom: 0; padding: 4px 0 0 12px; gap: 13px; }
.tool.mark { padding-left: 12px; gap: 14px; }
.tool.pick { padding-left: 13px; gap: 9px; }
.tool.perf { padding-left: 14px; gap: 8px; }
.tool.sync { padding-left: 14px; gap: 10px; }
.tool.off { padding-left: 14px; gap: 10px; color: #5c5c5c; }
.collapse { display: flex; padding: 16px 10px 0 0; justify-content: flex-end; }
.blue { stroke: #5aaee0; }
.green { stroke: #5fd07a; }

/* Work area */
.work { flex: 1; display: grid; grid-template-columns: 40px minmax(0, 1fr) 182px 180px; grid-template-rows: minmax(0, 1fr); min-height: 0; }
.rail button { width: 40px; height: 40px; padding-left: 2px; }
.rail .current { border-left: 3px solid #2aac94; padding: 0 2px 0 0; color: #fff; }
.dax { font-size: 7px; font-weight: 700; fill: #ddd; stroke: none; }
.center { border-left: 1px solid #555; display: flex; flex-direction: column; min-width: 0; }
.upper { flex: 1; display: flex; min-height: 0; }
.canvas { flex: 1; background: #fff; color: #252423; min-width: 0; }
.visual { position: relative; border: 1px solid #666; border-bottom-color: #555; height: 740px; }
.visual::after { content: ""; position: absolute; left: 0; right: 0; bottom: -3px; height: 2px; background: repeating-linear-gradient(90deg, #555 0 2px, transparent 2px 4px); }
.vtitle { display: flex; justify-content: space-between; padding: 0 5px 0 4px; height: 29px; }
.vtitle h1 { font: 400 17px/18px Roboto, "Open Sans", sans-serif; color: #252423; }
.vtools { display: flex; gap: 15px; height: 24px; align-items: center; color: #666; }
.legend { display: flex; align-items: center; padding-left: 4px; height: 20px; color: #605e5c; }
.legend b { width: 80px; font-size: 13px; }
.legend ul { flex: 1; display: flex; justify-content: space-between; margin-right: 38px; }
.legend li { display: flex; align-items: center; gap: 2px; }
.legend circle { stroke: none; }
.legend .next { margin-right: 13px; fill: #999; stroke: #000; stroke-width: 2; }
.plot { width: 100%; margin-top: 6px; }
.plot text { font-size: 12px; fill: #605e5c; stroke: none; }
.plot .axis { font: 400 14px Roboto, sans-serif; fill: #252423; }
.grid { stroke: #c4c4c4; stroke-dasharray: 1 4; }
.h { position: absolute; width: 8px; height: 8px; border: 0 solid #999; }
.tl { left: 0; top: 0; border-width: 2px 0 0 2px; }
.tm { left: calc(50% - 6px); top: 0; width: 12px; border-top-width: 2px; }
.bl { left: 0; bottom: 0; border-width: 0 0 2px 2px; }
.bm { left: calc(50% - 6px); bottom: 0; width: 12px; border-bottom-width: 2px; }
.br { right: 0; bottom: 0; border-width: 0 2px 2px 0; }
.ml { left: 0; top: calc(50% - 6px); height: 12px; border-left-width: 2px; }
.mr { right: 0; top: calc(50% - 6px); height: 12px; border-left-width: 2px; width: 2px; }
.tooltip { position: absolute; left: 724px; top: 365px; width: 501px; height: 144px; background: #fff; padding: 18px 8px 0 12px; font-size: 13px; }
.tooltip::after { content: ""; position: absolute; right: -6px; top: 8px; border: 6px solid transparent; border-left-color: #fff; border-right: 0; }
.tooltip dl { display: grid; grid-template-columns: 209px 1fr; column-gap: 12px; row-gap: 2px; line-height: 17px; }
.tooltip dt { text-align: right; white-space: nowrap; }

/* Filter pane */
.filters { width: 201px; background: #fff; color: #252423; border-left: 1px solid #888; display: flex; flex-direction: column; overflow: hidden; }
.fhead { flex: none; height: 38px; display: flex; align-items: center; padding: 0 12px 0 14px; }
.fhead h2 { font-size: 15px; font-weight: 600; margin: 0 auto 0 9px; }
.fhead button { margin-left: 22px; }
.fsearch { flex: none; height: 31px; margin: 7px 12px 4px 8px; border: 1px solid #8a8886; border-radius: 2px; display: flex; align-items: center; padding-left: 12px; gap: 15px; }
.fsearch input { width: 100px; }
.fsearch input::placeholder { color: #252423; opacity: 1; }
.flist { flex: 1; border-top: 1px solid #aaa; padding: 17px 8px 0 8px; min-height: 0; overflow: hidden; background: linear-gradient(#d0d0d0, #d0d0d0) 100% 8px / 6px 752px no-repeat; }
.flist h3 { font-size: 12px; font-weight: 400; display: flex; justify-content: space-between; padding-right: 3px; height: 24px; white-space: nowrap; }
.flist h3 span { color: #888; line-height: 14px; }
.flist .later { margin-top: 27px; }
.card { height: 46px; margin-bottom: 6px; border: 1px solid #c8c6c4; border-radius: 2px; padding: 4px 8px; line-height: 18px; }
.set { background: #f3f2f1; }
.set p:first-child { font-weight: 700; }
.drop { height: 46px; border: 1px solid #252423; border-radius: 2px; line-height: 46px; text-align: center; }

/* Page tabs */
.pages { flex: none; height: 35px; background: #292929; display: grid; grid-template-columns: 45px 43px 20px 19px 63px 113px 77px 109px 120px 97px 105px 39px; }
.pages a { border-left: 1px solid #555; text-align: center; line-height: 36px; white-space: nowrap; color: #fff; }
.pages .active { font-weight: 700; border-bottom: 4px solid #2aac94; }
.view { padding-bottom: 6px; color: #fff; }
.view.on { background: linear-gradient(#2aac94, #2aac94) 10px 28px / 24px 3px no-repeat; }
.add { background: #2aac94; color: #292929; display: flex; align-items: center; justify-content: center; padding-bottom: 3px; }
.add svg { stroke-width: 3; }

/* Visualisation pane */
.viz { border: solid #6b6b6b; border-width: 0 1px; display: flex; flex-direction: column; color: #fff; min-height: 0; }
.viz > * { flex: none; }
.phead { height: 38px; display: flex; align-items: center; justify-content: space-between; padding: 0 10px 0 8px; color: #fff; }
.phead h2 { font-size: 15px; font-weight: 600; }
.viz h3 { font-size: 12px; font-weight: 600; padding-left: 8px; line-height: 18px; }
.modes { display: flex; gap: 35px; padding: 1px 0 0 8px; }
.modes button { width: 32px; height: 32px; }
.modes .on { background: #292929; color: #ccc; }
.modes .grey { color: #a0a0a0; }
.notch { color: #888; margin-top: 4px; }
.types { display: grid; grid-template-columns: repeat(6, 24px); grid-auto-rows: 24px; gap: 4px; height: 234px; padding: 8px 0 0 8px; }
.types button { display: flex; align-items: center; justify-content: center; }
.types .on { border: 1px solid #fff; }
.types svg { width: 18px; height: 18px; }
.types text { font-size: 7px; font-weight: 600; fill: #6cb8f6; stroke: none; }
.types .letter { font-size: 16px; color: #3a96dd; font-weight: 600; }
.types .dots { font-weight: 700; font-size: 14px; padding-bottom: 4px; height: 18px; }
.w { stroke: #d6d6d6; }
.l { stroke: #5aaeee; }
.b { fill: #0f6cbd; stroke: #4fa6ea; }
.g { fill: #5f5f5f; stroke: #8f8f8f; }
.viz .wells { flex: 1; border-top: 1px solid #ddd; padding: 8px 5px 0 4px; min-height: 0; overflow: hidden; background: linear-gradient(#666, #666) 100% 2px / 6px 538px no-repeat; }
.wells h4 { font-size: 12px; font-weight: 400; line-height: 18px; padding-left: 8px; height: 22px; }
.well { border: 1px dashed #6b6b6b; height: 30px; padding: 3px 2px; margin-bottom: 10px; }
.empty { height: 28px; line-height: 27px; padding: 0 10px; }
.tall { height: 56px; }
.last { height: 37px; }
.field { border: 1px solid #6b6b6b; border-radius: 2px; background: #202020; display: grid; grid-template-columns: minmax(0, 1fr) 8px 7px; column-gap: 7px; align-items: center; padding: 0 5px 0 4px; line-height: 20px; white-space: nowrap; }
.sub { grid-column: 1 / 3; padding-left: 8px; }
.wells .strong { font-weight: 600; height: 20px; }
.toggle { display: flex; justify-content: space-between; align-items: center; padding: 0 14px 0 8px; height: 27px; white-space: nowrap; }
.toggle input { flex: none; appearance: none; width: 32px; height: 16px; border: 1px solid #bbb; border-radius: 8px; background: radial-gradient(circle at 8px 7px, #bbb 4px, transparent 5px); }
.toggle input:checked { border: 0; background: radial-gradient(circle at 23px 8px, #222 4px, #2aac94 5px); }
.toggle input:checked::before { content: "✓"; padding-left: 7px; color: #222; display: block; line-height: 16px; font-size: 10px; }
.cut { height: 10px; overflow: hidden; background: #000; margin-top: 4px; }

/* Data pane */
.data { min-width: 0; }
.dsearch { height: 24px; margin: 7px 4px 9px; border: 1px solid #8a8a8a; border-radius: 3px; display: flex; align-items: center; gap: 8px; padding-left: 12px; color: #9a9a9a; }
.dsearch input { width: 120px; }
.dsearch input::placeholder { color: #9a9a9a; opacity: 1; }
.tree { color: #fff; padding-top: 1px; }
.tree li { height: 24px; display: grid; grid-template-columns: 12px 18px 1fr; align-items: center; padding-left: 16px; white-space: nowrap; }

/* Status bar */
.status { height: 25px; border-top: 1px solid #777; border-bottom: 1px solid #000; display: flex; align-items: center; padding: 0 4px; }
.zoom { margin-left: auto; display: flex; gap: 5px; align-items: center; font-size: 14px; }
.zoom input { appearance: none; width: 102px; height: 12px; background: linear-gradient(#ccc, #ccc) 0 50% / 100% 1px no-repeat; }
.zoom input::-webkit-slider-thumb { appearance: none; width: 4px; height: 11px; background: #ddd; }
.pct { margin: 0 12px 0 13px; }
.update { width: 250px; margin-left: 12px; white-space: nowrap; text-align: right; font-size: 11px; }

/* Taskbar */
.taskbar { height: 40px; background: #1e1e1e; display: flex; justify-content: space-between; }
.apps { display: grid; grid-template-columns: 48px 50px repeat(9, 49px); }
.apps button { display: flex; align-items: center; justify-content: center; }
.art { stroke: none; }
.solid { fill: #fff; stroke: none; }
.apps .run { background: linear-gradient(#5cb860, #5cb860) 50% 100% / 40px 2px no-repeat; }
.apps .front { background: linear-gradient(#5cb860, #5cb860) 0 100% / 100% 2px no-repeat #4a4a4a; }
.tray { display: flex; align-items: center; gap: 9px; border-right: 1px solid #777; margin-right: 4px; padding-right: 6px; }
.clock { width: 64px; text-align: center; font-size: 11px; line-height: 18px; }
.notes { position: relative; margin-left: 8px; width: 28px; height: 22px; }
.notes b { position: absolute; left: 8px; top: 8px; width: 16px; height: 16px; border-radius: 8px; background: #333; border: 1px solid #888; font-size: 10px; line-height: 14px; text-align: center; }
```
FILE: app.js
```js
const NS = "http://www.w3.org/2000/svg";
function el(parent, name, attrs, text) {
  const node = document.createElementNS(NS, name);
  for (const key in attrs) node.setAttribute(key, attrs[key]);
  if (text !== undefined) node.textContent = text;
  parent.appendChild(node);
  return node;
}

// Theme thumbnails in the ribbon
const themes = [
  "118dff 12239e e66c37 6b007b e044a7 744ec2 d9b300 d64550",
  "118dff 12239e e66c37 6b007b e044a7 502a7a 1fae4a 0f4a45",
  "5aa02c 2f3a5f b09020 8c1f30 5a9ad5 6b1f8c e66c10 0f4a25",
  "0f3a6b 2a80ff 0f3a40 5aa070 0f3a60 118dff 1a3a30 4fa070",
  "6b7a80 2f2a30 a08070 3a4a4a 80949a 6b3a35 908078 262626",
  "3a4a5a c07aa8 6b2f5a 7a9ab5 6b0a2a 5a8098 402a40 f05aa0"
];
const heights = [14, 9, 12, 8, 7, 11, 9, 12];
const gallery = document.getElementById("themes");
themes.forEach(theme => {
  const svg = el(gallery, "svg", { width: 49, height: 28, viewBox: "0 0 49 28" });
  el(svg, "text", { x: 2, y: 8 }, "Aa");
  theme.split(" ").forEach((c, i) => el(svg, "rect", { x: 2 + i * 6, y: 25 - heights[i], width: 4, height: heights[i], fill: "#" + c }));
});

// Legend
const codes = "ABE d9a6ef,ABI a4b7ee,ABQ 9cff88,ABR ffe38a,ACK b8a585,ACV 6c2389,ACY 9aa68c,ADK b88590,AEX 20408a,AGS 44108a,AKN 2c2838,ALO a89a8e,AMA 80bb45,ASE 155a8c,ATL 118dff,ATW 22b455,AUS 12239e,AVL e66c37,AVP 262c38,AZO 504850,BDL 6b007b,BFL a066b0,BGM 64bb50,BGR 7d6c48,BHM 46185a,BIL 68735e,BIS 2a1058";
const legend = document.getElementById("legend");
codes.split(",").forEach(entry => {
  const [code, color] = entry.split(" ");
  const li = document.createElement("li");
  const svg = el(li, "svg", { width: 11, height: 11 });
  el(svg, "circle", { cx: 5.5, cy: 5.5, r: 5.5, fill: "#" + color });
  li.append(code);
  legend.appendChild(li);
});

// Scatter plot
const plot = document.getElementById("plot");
const px = month => 91.5 + month * 96.4;
const py = lat => 851.5 - lat * 9.04;
for (let m = 0; m <= 12; m += 2) {
  el(plot, "path", { class: "grid", d: `M${Math.round(px(m)) + .5} 174V808` });
  el(plot, "text", { x: px(m), y: 822, "text-anchor": "middle" }, m);
}
for (let lat = 10; lat <= 70; lat += 10) {
  el(plot, "path", { class: "grid", d: `M92 ${Math.round(py(lat)) + .5}H1342` });
  el(plot, "text", { x: 81, y: py(lat) + 4, "text-anchor": "end" }, lat);
}
el(plot, "text", { class: "axis", x: 718, y: 842, "text-anchor": "middle" }, "MONTH");
el(plot, "text", { class: "axis", x: 0, y: 0, "text-anchor": "middle", transform: "translate(60 490) rotate(-90)" }, "LAT");

// month, lat, rings from outside in: "radius colour"; "~radius" starts a band of many thin rings
const bubbles = [
  [2, 60, "16 504f57"],
  [1, 50, "15.5 c196a2"], [2, 50, "19.5 c196a2"], [3, 50, "17.5 c196a2"], [6, 50, "24.5 c196a2"],
  [7, 50, "20.5 4c3046"], [8, 50, "21 4c4552,18 34152d"], [9, 50, "17 c196a2"], [10, 50, "17.5 c196a2"],
  [1, 40, "36.5 83747f,28.5 b04a70,27.5 c0b8a0,26 2f6070,~25,16 4e5643"],
  [2, 40, "33 7d7075,28 805860,26.5 6a80b0,~26,16 5c40b5"],
  [3, 40, "26 8a5cc8,24.5 5f4a5e,~23,16 716639"],
  [4, 40, "37.5 8a606a,23.5 c0a060,~22.5,15.5 4b483f"],
  [5, 40, "32 c4232e,25.5 80655a,~24,16.5 6b5870"],
  [6, 40, "43.5 ee9ab0,39 c01a26,32.5 3fdd15,29 2f4a28,27.5 5a6a50,~26.5,16 3f3e44"],
  [7, 40, "37 ee9ab0,26.5 3fdd15,25 702838,24 b0a0c8,~23,15.5 86c1de"],
  [8, 40, "36 2450f5,33 b0a5c0,30.5 e8a090,29.5 c01a26,28.5 e0d0b0,27 c01a26,26 6a7a48,~24,15.5 5040a8"],
  [9, 40, "28.5 cfc4a0,27 c01a26,22 6090c0,~21,15.5 c05080"],
  [10, 40, "36 eeaf9c,27 9cb884,22 7a1a35,~20,15.5 a040b0"],
  [11, 40, "26 5ab08a,24.5 604a60,23 60b890,~22,15.5 705060"],
  [12, 40, "45 837576,32.5 54564a,28.5 80305a,27.5 b0d090,~26.5,16 504048"],
  [1, 30, "31.5 cf64a0,26 544045,24 1f2a5a,~22.5,16.5 927b80"],
  [2, 30, "31.5 cf64a0,28.5 8a5a3e,25 4a4080,~24,16.5 6c724c"],
  [3, 30, "28 3f7a88,25 1f5f80,23 5c3428,~21.5,16 e5ee72"],
  [4, 30, "35 6a6189,27 c04d98,25 99a09b,~23,15.5 7cdc75"],
  [5, 30, "26 7a5a48,25 75f0ac,22.5 705848,~22,15.5 835f49"],
  [6, 30, "27 50d0c8,~26,16 3b3044"],
  [7, 30, "24 50d0c8,23 4a3a40,~21,16 6a5568"],
  [12, 30, "30 28708c,27.5 d8d860,26.5 8a6a60,~25,21 20208a"],
  [1, 20, "17 d09a98,16 0560ac"],
  [2, 20, "19 6ac8f6,17.5 703050,16.5 b07080,15.5 2493c9"],
  [3, 20, "24.5 c79562,19.5 6ac4ee,17 404080,15.5 dc464d"],
  [4, 20, "32 c69563,19 3a3045,18 2a98d8,16.5 403050,15.5 e0a877"],
  [5, 20, "25.5 c69563,21.5 2a88a8,~19.5,15.5 165faa"],
  [6, 20, "23.5 705b5b,22 5fc3ee,20 d06070,~19,17 755f5b"],
  [7, 20, "36.5 7c92ff,20 80b8c0,18.5 9a6040,17 704848,16 a70c5f"],
  [8, 20, "38 7c92ff,18.5 e06080,17.5 206080,16 a70c5f"],
  [9, 20, "34 7c92ff,15.5 3e4256"],
  [10, 20, "20 6078e8,18.5 302060,17 e07080,16.5 5aae9c"],
  [11, 20, "18.5 5fc0a0,17 604050,16 2085c2"],
  [12, 20, "25 7c92ff,17.5 6fc0f0,16.5 e44142"],
  [1, 10, "19 526b54"], [2, 10, "16.5 526b54"], [3, 10, "16.5 2b2a26"], [6, 10, "15.5 526b54"],
  [7, 10, "19 4b3439"], [8, 10, "16.5 526b54"], [9, 10, "15.5 4c362f"], [10, 10, "16.5 4b793b"]
];
const bandColors = ["#4f8f68", "#7d5570", "#45414c", "#8aae80", "#5470a0", "#a07860", "#2f6058", "#9a90a8", "#6b7040"];
bubbles.forEach(([month, lat, spec], n) => {
  const cx = px(month), cy = py(lat) - .5;
  const rings = spec.split(",");
  rings.forEach((ring, i) => {
    if (ring[0] === "~") {
      const inner = parseFloat(rings[i + 1]);
      let k = n * 5;
      for (let r = parseFloat(ring.slice(1)); r > inner; r -= .8) {
        k += 1 + (k * 7 + n) % 4;
        el(plot, "circle", { cx, cy, r, fill: bandColors[k % bandColors.length], stroke: "none" });
      }
      return;
    }
    const [r, color] = ring.split(" ");
    el(plot, "circle", { cx, cy, r, fill: "#" + color, stroke: i ? "none" : "#0003" });
  });
});
```
